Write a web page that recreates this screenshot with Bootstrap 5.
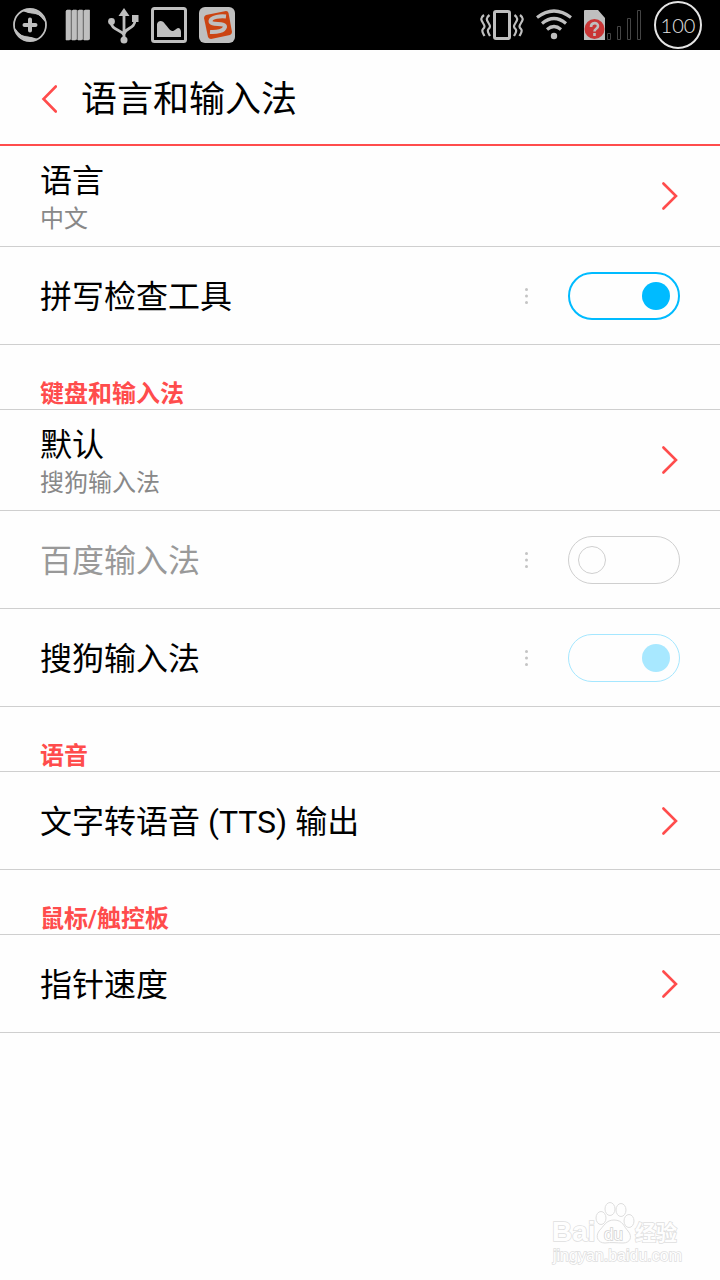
<!DOCTYPE html>
<html lang="zh-CN">
<head>
<meta charset="utf-8">
<meta name="viewport" content="width=device-width, initial-scale=1">
<title>语言和输入法</title>
<link href="https://cdn.jsdelivr.net/npm/bootstrap@5.3.0/dist/css/bootstrap.min.css" rel="stylesheet">
<style>
  :root { --accent: #ff4c4c; --rule: #cfcfcf; --on: #00bbff; }
  body { font-family: Roboto, "Noto Sans CJK SC", sans-serif; color: #000; background: #fefefe; }
  svg { display: block; flex: none; }
  .status-bar { height: 50px; padding: 0 18px 0 1px; background: #000; color: #bfbfbf; }
  .status-end { gap: 12px; }
  .battery { width: 48px; height: 48px; border: 2px solid #e4e4e4; font-family: Lato, sans-serif; font-weight: 300; font-size: 20px; line-height: 24px; color: #e4e4e4; }
  .title-bar { height: 96px; padding: 4px 40px 0; border-bottom: 2px solid var(--accent); }
  .title-bar h1 { padding-top: 2px; font-size: 36px; line-height: 48px; font-weight: 400; }
  .back-link, .chevron { color: var(--accent); }
  .setting { min-height: 98px; padding: 0 40px; border-bottom: 1px solid var(--rule); color: #000; font-size: 32px; line-height: 44px; }
  .setting.two-line { min-height: 101px; }
  .setting .caption { padding-top: 2px; }
  .setting .summary { font-size: 24px; line-height: 32px; color: #888; }
  .setting.inactive label { color: #999; }
  .section-title { height: 65px; margin: 0; padding: 0 40px; border-bottom: 1px solid var(--rule); font-size: 24px; line-height: 30px; font-weight: 700; color: var(--accent); }
  .dots { margin-right: 38px; color: #c4c4c4; }
  .form-check-input.toggle {
    flex: none; width: 112px; height: 48px; margin: 0; border: 1px solid var(--rule); border-radius: 24px;
    background: url("data:image/svg+xml,%3Csvg xmlns='http://www.w3.org/2000/svg' viewBox='0 0 112 48'%3E%3Ccircle cx='24' cy='24' r='13.5' fill='none' stroke='%23cfcfcf'/%3E%3C/svg%3E") 0 0 / 112px 48px no-repeat border-box;
    opacity: 1;
  }
  .form-check-input.toggle:checked {
    border: 2px solid var(--on);
    background-image: url("data:image/svg+xml,%3Csvg xmlns='http://www.w3.org/2000/svg' viewBox='0 0 112 48'%3E%3Ccircle cx='88' cy='24' r='14' fill='%2300bbff'/%3E%3C/svg%3E");
  }
  .form-check-input.toggle:checked:disabled {
    border: 1px solid #a5e7ff;
    background-image: url("data:image/svg+xml,%3Csvg xmlns='http://www.w3.org/2000/svg' viewBox='0 0 112 48'%3E%3Ccircle cx='88' cy='24' r='14' fill='%23a8e8ff'/%3E%3C/svg%3E");
  }
  .brand { padding: 0 36px 10px 0; }
</style>
</head>
<body>
<svg width="0" height="0" class="position-absolute" aria-hidden="true">
  <symbol id="next" viewBox="0 0 20 30"><path d="M3.400 2.500 16 15 3.400 27.500" fill="none" stroke="currentColor" stroke-width="2.600" stroke-linecap="round"/></symbol>
  <symbol id="more" viewBox="0 0 6 20"><g fill="currentColor"><circle cx="2.500" cy="3.500" r="1.500"/><circle cx="2.500" cy="10" r="1.500"/><circle cx="2.500" cy="16.500" r="1.500"/></g></symbol>
</svg>
<div class="d-flex flex-column min-vh-100">
  <div class="status-bar d-flex align-items-center justify-content-between">
    <div class="d-flex">
      <svg width="48" height="48" viewBox="0 0 48 48" fill="none" stroke="currentColor" aria-hidden="true">
        <circle cx="29" cy="24" r="16" stroke-width="1.800"/>
        <path d="M21 10C28 5 42 9 45 22C42 20 41 15 36 14C30 13 27 12 21 10zM37 38C30 43 16 39 13 26C16 28 17 33 22 34C28 35 31 36 37 38z" fill="currentColor" stroke="none"/>
        <path d="M22 11.500c6 2 11 1 15 3 3 1.500 4 5 7 7M36 36.500c-6-2-11-1-15-3-3-1.500-4-5-7-7" stroke="#000" stroke-width="1"/>
        <path d="M29 18.500v11M23.500 24h11" stroke-width="4" stroke-linecap="round"/>
      </svg>
      <svg width="48" height="48" viewBox="0 0 48 48" aria-hidden="true">
        <path d="M17 9h24v29l-1 1H17z" fill="#555"/>
        <path d="M17 10l1-1h3.500v29l-1 1H17zM23 10l1-1h3.500v29l-1 1H23zM29 10l1-1h3.500v29l-1 1H29zM35 10l1-1h4.500v29l-1 1H35z" fill="currentColor" stroke="currentColor" stroke-width=".6"/>
      </svg>
      <svg width="48" height="48" viewBox="0 0 48 48" fill="none" stroke="currentColor" aria-hidden="true">
        <path d="M27 39V12M14 21c0 8 10 7 13 13M38 19c0 9-9 7-11 14" stroke-width="2.800"/>
        <path d="M27 7l5.500 8h-11zM35 14h6.500v7H35z" fill="currentColor" stroke="none"/>
        <circle cx="14.500" cy="20.500" r="3.400" fill="currentColor" stroke="none"/><circle cx="27" cy="39" r="3.500" fill="currentColor" stroke="none"/>
      </svg>
      <svg width="48" height="48" viewBox="0 0 48 48" aria-hidden="true">
        <rect x="7.500" y="7.500" width="33" height="33" rx="2" fill="none" stroke="currentColor" stroke-width="3"/>
        <path d="M12 36V23c1-4 6-4 8 0 3 3 4 6 7 7 3 0 3-2 6-3 2 0 3 2 3 4v5z" fill="currentColor"/>
      </svg>
      <svg width="48" height="48" viewBox="0 0 48 48" aria-hidden="true">
        <rect x="6" y="6" width="36" height="36" rx="6" fill="currentColor"/>
        <path d="M13 14l20-4q2 0 2.500 2l3.500 19q0 2-2 3l-19 4q-2 0-3-2l-4-19q0-2 2-3z" fill="#cb4412"/>
        <path d="M33 15.500c-5-.5-15 0-15.500 4.500-.5 5 15 1 14.500 6-1 4-8 5.500-15 5" fill="none" stroke="currentColor" stroke-width="4"/>
      </svg>
    </div>
    <div class="status-end d-flex align-items-center">
      <svg width="44" height="48" viewBox="0 0 44 48" fill="none" stroke="currentColor" aria-hidden="true">
        <rect x="14.500" y="10.500" width="15" height="27" rx="1.500" stroke-width="3"/>
        <path d="M9.500 14c-4 3-3 5-1 8s2 4 0 6 0 4 1.500 7M4 14c-4 3-3 5-1 8s2 4 0 6 0 4 1.500 7M34.500 14c4 3 3 5 1 8s-2 4 0 6 0 4-1.500 7M40 14c4 3 3 5 1 8s-2 4 0 6 0 4-1.500 7" stroke-width="2.200"/>
      </svg>
      <svg width="36" height="48" viewBox="0 0 36 48" fill="none" stroke="currentColor" stroke-width="3.200" aria-hidden="true">
        <path d="M1 16.500q17-13 34 0M6 22.500q12-10 24 0M11 28.500q7-6 14 0"/><circle cx="18" cy="35" r="3.200" fill="currentColor" stroke="none"/>
      </svg>
      <svg width="58" height="48" viewBox="0 0 58 48" aria-hidden="true">
        <path d="M0 10q0-1 1-1h13l7 8v22H0z" fill="currentColor"/>
        <circle cx="10.500" cy="28" r="10" fill="#c93636"/>
        <path d="M7 26c0-5 7-5 7-1 0 3-3.500 2.500-3.500 5.500M10.500 32v3" fill="none" stroke="currentColor" stroke-width="2.600"/>
        <g fill="none" stroke="#444"><path d="M23.500 32.500h3v6h-3zM33.500 25.500h3v13h-3zM43.500 17.500h3v21h-3zM53.500 9.500h3v29h-3z"/></g>
      </svg>
      <div class="battery rounded-circle d-flex align-items-center justify-content-center">100</div>
    </div>
  </div>

  <header class="title-bar d-flex align-items-center">
    <a href="#" class="back-link me-4" aria-label="返回"><svg width="17" height="30" viewBox="0 0 17 30"><path d="M15.800 2.500 3.500 15l12.300 12.500" fill="none" stroke="currentColor" stroke-width="2.600" stroke-linecap="round"/></svg></a>
    <h1 class="m-0">语言和输入法</h1>
  </header>

  <main>
    <a href="#" class="setting two-line d-flex align-items-center justify-content-between text-decoration-none">
      <div class="caption"><div>语言</div><div class="summary">中文</div></div>
      <svg class="chevron" width="20" height="30"><use href="#next"/></svg>
    </a>
    <div class="setting d-flex align-items-center">
      <label class="caption me-auto" for="spell">拼写检查工具</label>
      <svg class="dots" width="6" height="20"><use href="#more"/></svg>
      <input class="form-check-input toggle" type="checkbox" role="switch" id="spell" checked>
    </div>

    <h2 class="section-title d-flex align-items-end">键盘和输入法</h2>
    <a href="#" class="setting two-line d-flex align-items-center justify-content-between text-decoration-none">
      <div class="caption"><div>默认</div><div class="summary">搜狗输入法</div></div>
      <svg class="chevron" width="20" height="30"><use href="#next"/></svg>
    </a>
    <div class="setting inactive d-flex align-items-center">
      <label class="caption me-auto" for="baidu">百度输入法</label>
      <svg class="dots" width="6" height="20"><use href="#more"/></svg>
      <input class="form-check-input toggle" type="checkbox" role="switch" id="baidu">
    </div>
    <div class="setting d-flex align-items-center">
      <div class="caption me-auto"><label for="sogou" class="d-block">搜狗输入法</label></div>
      <svg class="dots" width="6" height="20"><use href="#more"/></svg>
      <input class="form-check-input toggle" type="checkbox" role="switch" id="sogou" checked disabled>
    </div>

    <h2 class="section-title d-flex align-items-end">语音</h2>
    <a href="#" class="setting d-flex align-items-center justify-content-between text-decoration-none">
      <span class="caption">文字转语音 (TTS) 输出</span>
      <svg class="chevron" width="20" height="30"><use href="#next"/></svg>
    </a>

    <h2 class="section-title d-flex align-items-end">鼠标/触控板</h2>
    <a href="#" class="setting d-flex align-items-center justify-content-between text-decoration-none">
      <span class="caption">指针速度</span>
      <svg class="chevron" width="20" height="30"><use href="#next"/></svg>
    </a>
  </main>

  <footer class="brand mt-auto d-flex justify-content-end">
    <svg width="136" height="68" viewBox="0 0 136 68" fill="#fefefe" stroke="#dedede" role="img" aria-label="Baidu 经验">
      <g stroke-width="1">
        <ellipse cx="53" cy="16" rx="5" ry="6.500"/><ellipse cx="62" cy="7" rx="5" ry="6.500"/><ellipse cx="73" cy="8" rx="5" ry="6.500"/><ellipse cx="81" cy="19" rx="5" ry="6.500"/>
        <path d="M66 18c9 0 10 7 14 11 5 6 2 12-5 12-6 0-12-1-18 0-7 0-10-6-6-12 5-5 7-11 15-11z"/>
      </g>
      <g paint-order="stroke" stroke-width="1.500" font-family="Liberation Sans, sans-serif">
        <text x="4" y="39" font-size="28" font-weight="700">Bai</text>
        <text x="56" y="38" font-size="17" stroke="#d2d2d2">du</text>
        <text x="87" y="38" font-size="21" font-weight="700" font-family="Noto Sans CJK SC, sans-serif">经验</text>
        <text x="5" y="59" font-size="16">jingyan.baidu.com</text>
      </g>
    </svg>
  </footer>
</div>
<script src="https://cdn.jsdelivr.net/npm/bootstrap@5.3.0/dist/js/bootstrap.bundle.min.js"></script>
</body>
</html>
